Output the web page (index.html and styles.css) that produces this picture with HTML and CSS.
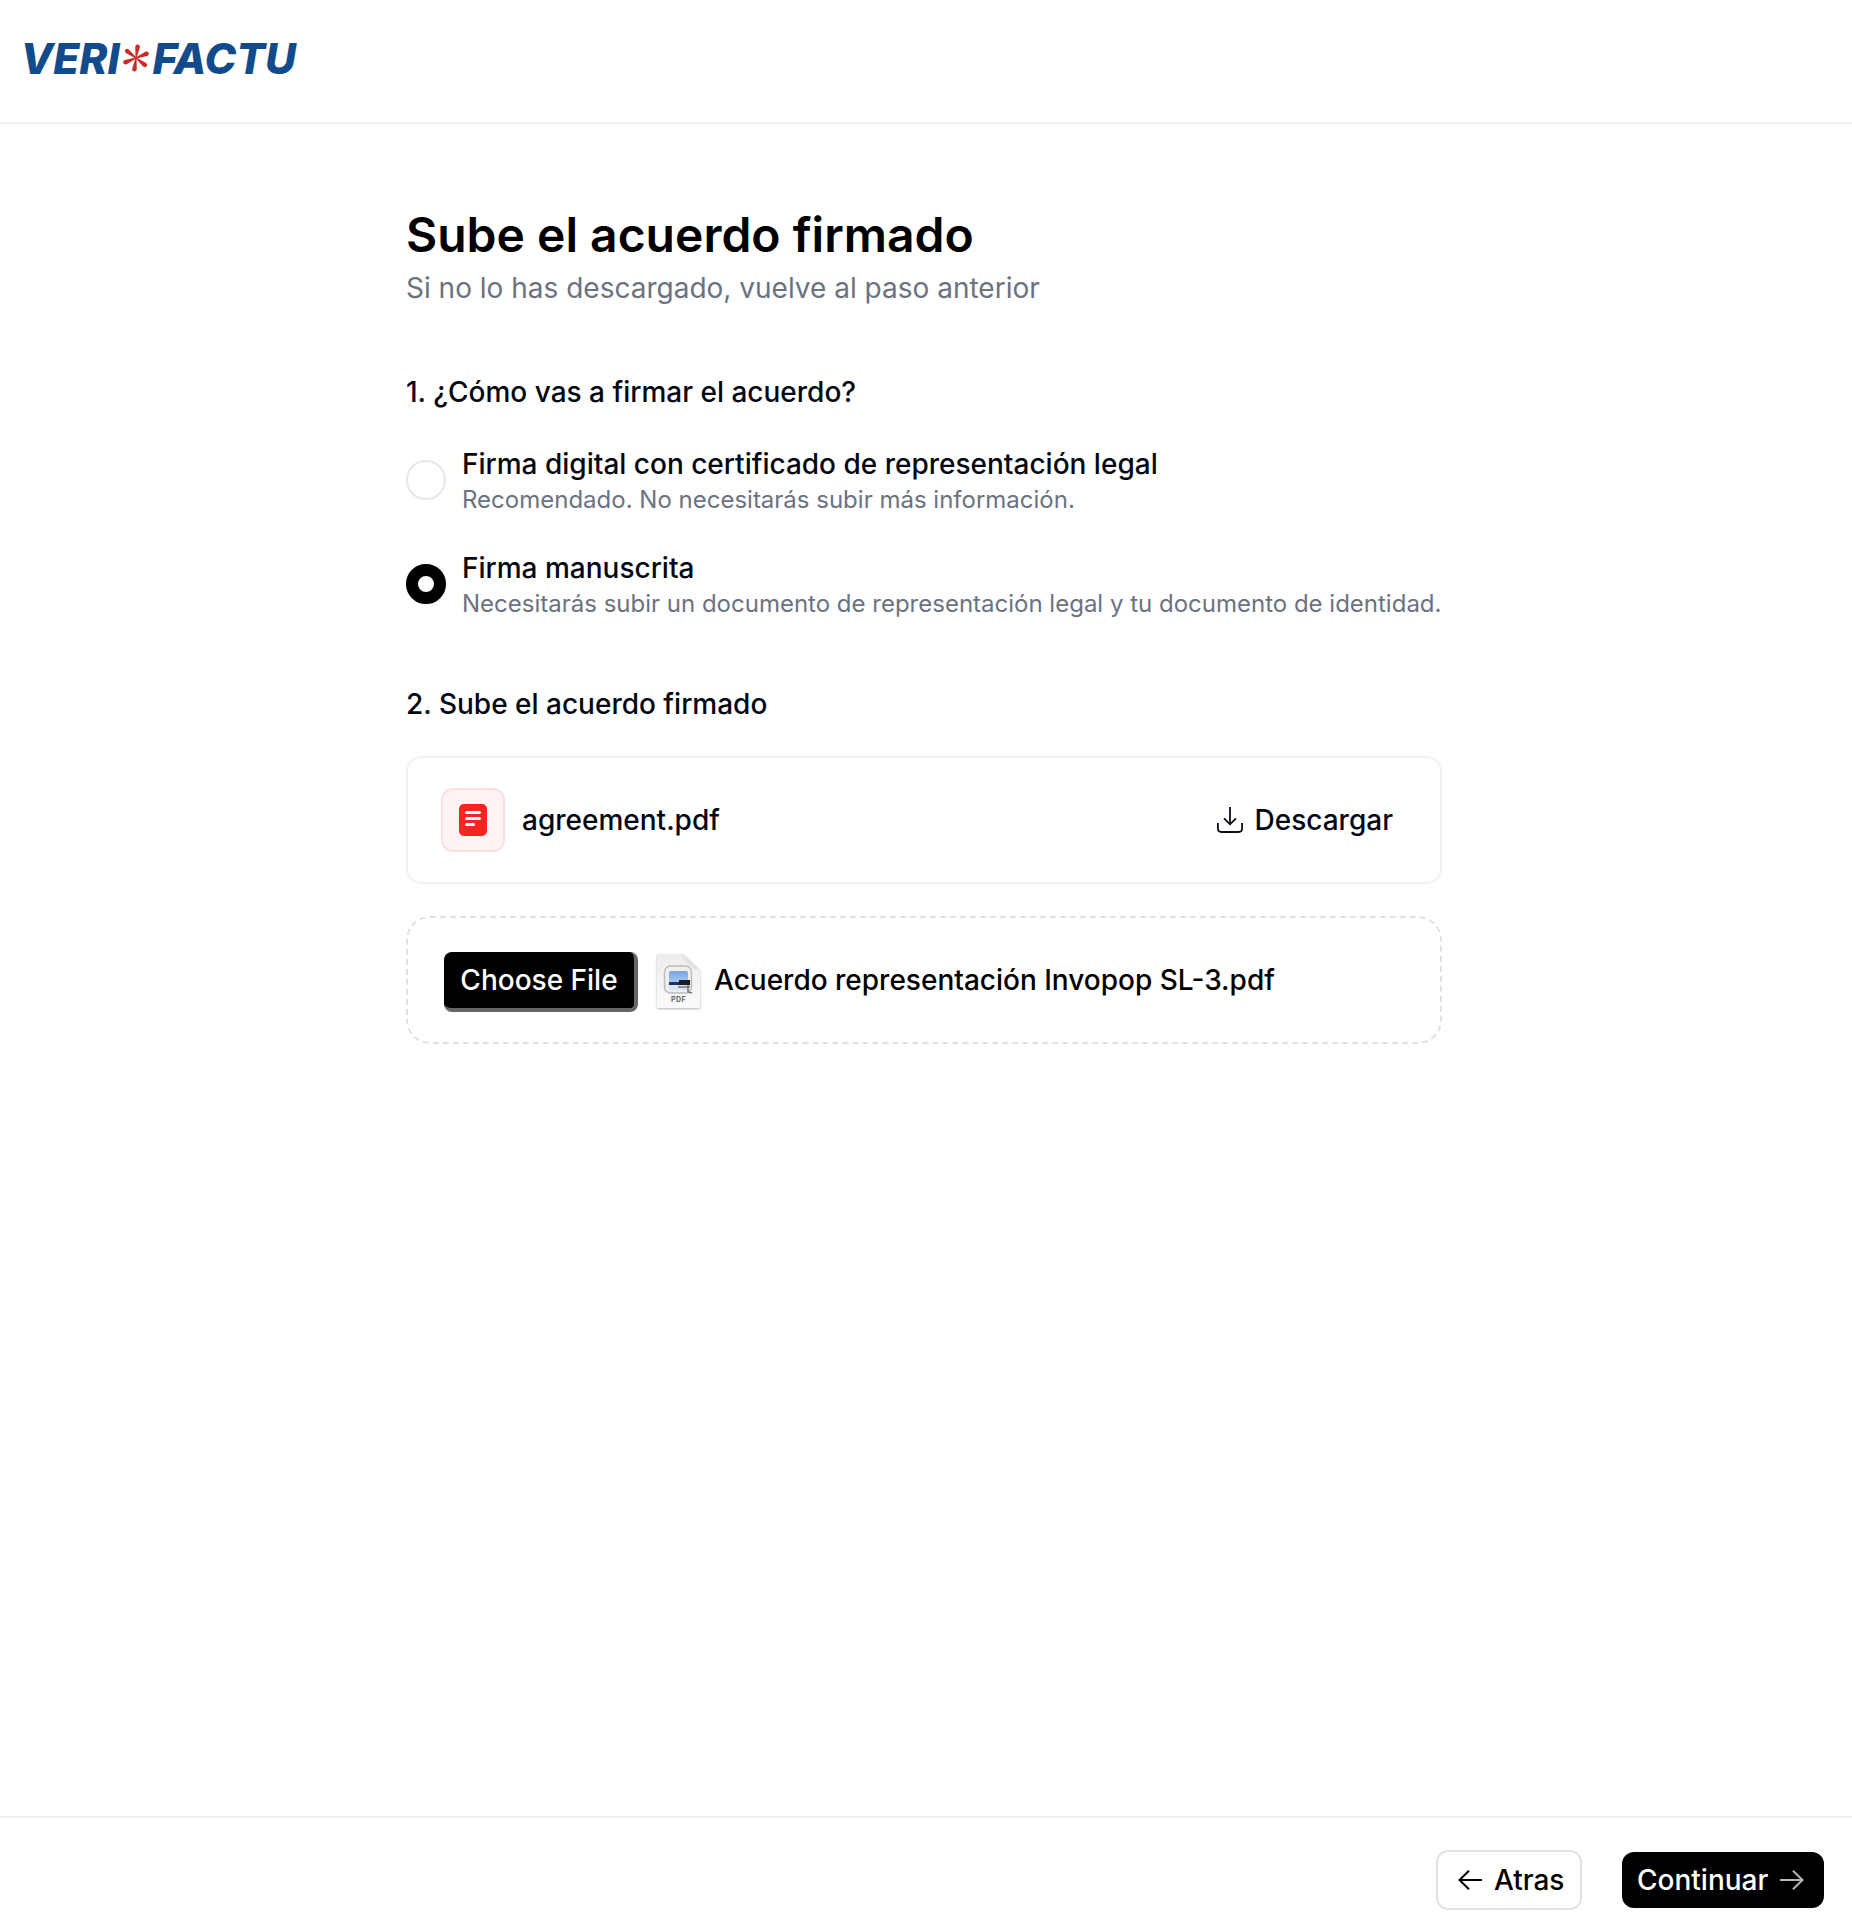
FILE: index.html
```html
<!DOCTYPE html>
<html lang="es">
<head>
<meta charset="utf-8">
<title>VERI*FACTU</title>
<link rel="stylesheet" href="styles.css">
</head>
<body>
<header class="header">
  <svg class="logo" width="276" height="36" viewBox="0 0 276 36" role="img" aria-label="VERI*FACTU">
    <text class="logo-text" x="-3.500" y="33.500" textLength="99" lengthAdjust="spacingAndGlyphs">VERI</text>
    <g class="logo-star" transform="translate(112 18) rotate(8)">
      <path id="petal" d="M-.5 0L-2.3-11a2.3 2.6 0 0 1 4.6 0L.5 0Z"/>
      <use href="#petal" transform="rotate(60)"/>
      <use href="#petal" transform="rotate(120)"/>
      <use href="#petal" transform="rotate(180)"/>
      <use href="#petal" transform="rotate(240)"/>
      <use href="#petal" transform="rotate(300)"/>
    </g>
    <text class="logo-text" x="128.500" y="33.500" textLength="143.500" lengthAdjust="spacingAndGlyphs">FACTU</text>
  </svg>
</header>

<main class="main">
  <div class="content">
    <h1 class="title">Sube el acuerdo firmado</h1>
    <p class="subtitle">Si no lo has descargado, vuelve al paso anterior</p>

    <section class="section">
      <h2 class="label">1. ¿Cómo vas a firmar el acuerdo?</h2>
      <div class="options">
        <div class="option">
          <span class="radio"></span>
          <div>
            <div class="label">Firma digital con certificado de representación legal</div>
            <div class="hint">Recomendado. No necesitarás subir más información.</div>
          </div>
        </div>
        <div class="option">
          <span class="radio radio-checked"></span>
          <div>
            <div class="label">Firma manuscrita</div>
            <div class="hint">Necesitarás subir un documento de representación legal y tu documento de identidad.</div>
          </div>
        </div>
      </div>
    </section>

    <section class="section">
      <h2 class="label">2. Sube el acuerdo firmado</h2>
      <div class="files">
        <div class="card">
          <span class="doc-icon">
            <svg width="28" height="32" viewBox="0 0 28 32">
              <rect width="28" height="32" rx="5" fill="#fb2320"/>
              <path d="M7.5 8.5h13M7.5 14.5h13M7.5 20.5h7" stroke="#fff" stroke-width="3" stroke-linecap="round"/>
            </svg>
          </span>
          <span class="label">agreement.pdf</span>
          <a class="download">
            <svg width="26" height="26" viewBox="0 0 26 26" fill="none" stroke="#0a0f1a" stroke-width="1.8">
              <path d="M13 0v17M7 11.3l6 6 6-6M.9 16v5.6q0 3.4 3.4 3.4h17.4q3.4 0 3.4-3.4V16"/>
            </svg>
            <span class="label">Descargar</span>
          </a>
        </div>
        <div class="dropzone">
          <button class="choose">Choose File</button>
          <svg class="pdf-icon" width="48" height="60" viewBox="0 0 48 60">
            <defs>
              <linearGradient id="sky" x2="0" y2="1"><stop stop-color="#79a5e2"/><stop offset="1" stop-color="#a9c8f2"/></linearGradient>
              <linearGradient id="sheet" x2="0" y2="1"><stop stop-color="#ededed"/><stop offset="1" stop-color="#fafafa"/></linearGradient>
              <linearGradient id="fold" x1="0" y1="1" x2="1" y2="0"><stop stop-color="#fff"/><stop offset=".55" stop-color="#d8d8d8"/></linearGradient>
            </defs>
            <path class="sheet" d="M4.5 3h24L46 19v36.500q0 1.500-1.500 1.500h-40Q3 57 3 55.500v-51Q3 3 4.500 3Z" fill="url(#sheet)"/>
            <path d="M29 3v12.500q0 2.500 2.500 2.500H45Z" fill="url(#fold)"/>
            <rect x="10.500" y="15" width="27" height="27" rx="6" fill="#eee" stroke="#bcbcbc" stroke-width="1.400"/>
            <rect x="15" y="20" width="19" height="19" rx="2" fill="#dde6f2"/>
            <path d="M15 32V22q0-2 2-2h15q2 0 2 2v10Z" fill="url(#sky)"/>
            <path d="M15 31h19v3H15Z" fill="#1e3264"/>
            <rect x="25" y="29" width="11" height="5" fill="#171b22"/>
            <path d="M24 36h12M34 34v7l4 1" stroke="#777" stroke-width="1.600" fill="none"/>
            <text x="24.500" y="51" class="pdf-text">PDF</text>
          </svg>
          <span class="file-name">Acuerdo representación Invopop SL-3.pdf</span>
        </div>
      </div>
    </section>
  </div>
</main>

<footer class="footer">
  <button class="btn btn-back">
    <svg width="24" height="20" viewBox="0 0 24 20" fill="none" stroke="#000" stroke-width="2"><path d="M24 10H1.500M11 .7L1.500 10l9.500 9.300"/></svg>
    Atras
  </button>
  <button class="btn btn-next">
    Continuar
    <svg width="24" height="20" viewBox="0 0 24 20" fill="none" stroke="#b5b5b5" stroke-width="2"><path d="M0 10h22.500M13 .7l9.500 9.300-9.500 9.300"/></svg>
  </button>
</footer>
</body>
</html>
```
FILE: styles.css
```css
* { box-sizing: border-box; }

body {
  margin: 0;
  height: 1926px;
  display: flex;
  flex-direction: column;
  background: #fff;
  color: #030712;
  font: 500 28px/40px Inter, sans-serif;
}

h1, h2, p { margin: 0; }
svg { display: block; flex: none; }

.header {
  height: 124px;
  padding: 40px 24px 0;
  border-bottom: 2px solid #f2f2f3;
}
.logo { overflow: visible; }
.logo-text {
  font-size: 42.600px;
  font-weight: 800;
  font-style: italic;
  fill: #114b8b;
}
.logo-star { fill: #cb2a26; }

.main { flex: 1; padding-top: 79px; }
.content { width: 1036px; margin-left: 406px; }

.title {
  font-size: 48px;
  font-weight: 600;
  line-height: 64px;
  color: #000;
}
.subtitle {
  margin-top: 1px;
  font-weight: 400;
  color: #6b7280;
}
.section { margin-top: 64px; }
.label {
  font-size: 28px;
  font-weight: 500;
  line-height: 40px;
}
.hint {
  font-size: 24px;
  font-weight: 400;
  line-height: 32px;
  color: #6b7280;
  white-space: nowrap;
}

.options, .files {
  display: flex;
  flex-direction: column;
  gap: 32px;
  margin-top: 32px;
}
.option { display: flex; align-items: center; gap: 16px; }
.radio {
  flex: none;
  width: 40px;
  height: 40px;
  border: 2px solid #e5e7eb;
  border-radius: 50%;
}
.radio-checked { border: 12px solid #000; }

.card, .dropzone {
  display: flex;
  align-items: center;
  height: 128px;
}
.card {
  padding: 0 47px 0 33px;
  border: 2px solid #f2f2f3;
  border-radius: 16px;
}
.doc-icon {
  display: grid;
  place-items: center;
  width: 64px;
  height: 64px;
  margin-right: 17px;
  border: 2px solid #ffe0e0;
  border-radius: 12px;
  background: #fff3f3;
}
.download {
  display: flex;
  align-items: center;
  gap: 12px;
  margin-left: auto;
}

.dropzone {
  padding-left: 36px;
  border: 2px dashed #e0e1e8;
  border-radius: 24px;
}
.choose {
  width: 194px;
  height: 60px;
  margin-top: 4px;
  padding: 0;
  border: solid #000;
  border-width: 0 4px 4px 0;
  border-color: #000 #666 #666 #000;
  border-radius: 8px;
  background: #000;
  color: #fff;
  font: 500 28px/40px Inter, sans-serif;
}
.pdf-icon { margin: 2px 12px 0 16px; }
.sheet { filter: drop-shadow(0 1px 1px rgba(0, 0, 0, .3)); }
.pdf-text {
  font-size: 7px;
  font-weight: 700;
  letter-spacing: .5px;
  text-anchor: middle;
  fill: #666;
}
.file-name { color: #000; }

.footer {
  display: flex;
  justify-content: flex-end;
  align-items: center;
  gap: 40px;
  height: 110px;
  padding: 16px 28px 0 0;
  border-top: 2px solid #f2f2f3;
}
.btn {
  display: flex;
  align-items: center;
  gap: 12px;
  border-radius: 12px;
  font: 500 28px/40px Inter, sans-serif;
}
.btn-back {
  height: 60px;
  width: 146px;
  padding: 0 0 0 20px;
  border: 2px solid #e2e3ea;
  background: #fff;
  color: #000;
}
.btn-next {
  height: 56px;
  width: 202px;
  padding: 0 0 0 15px;
  border: 0;
  background: #000;
  color: #fff;
}
```
